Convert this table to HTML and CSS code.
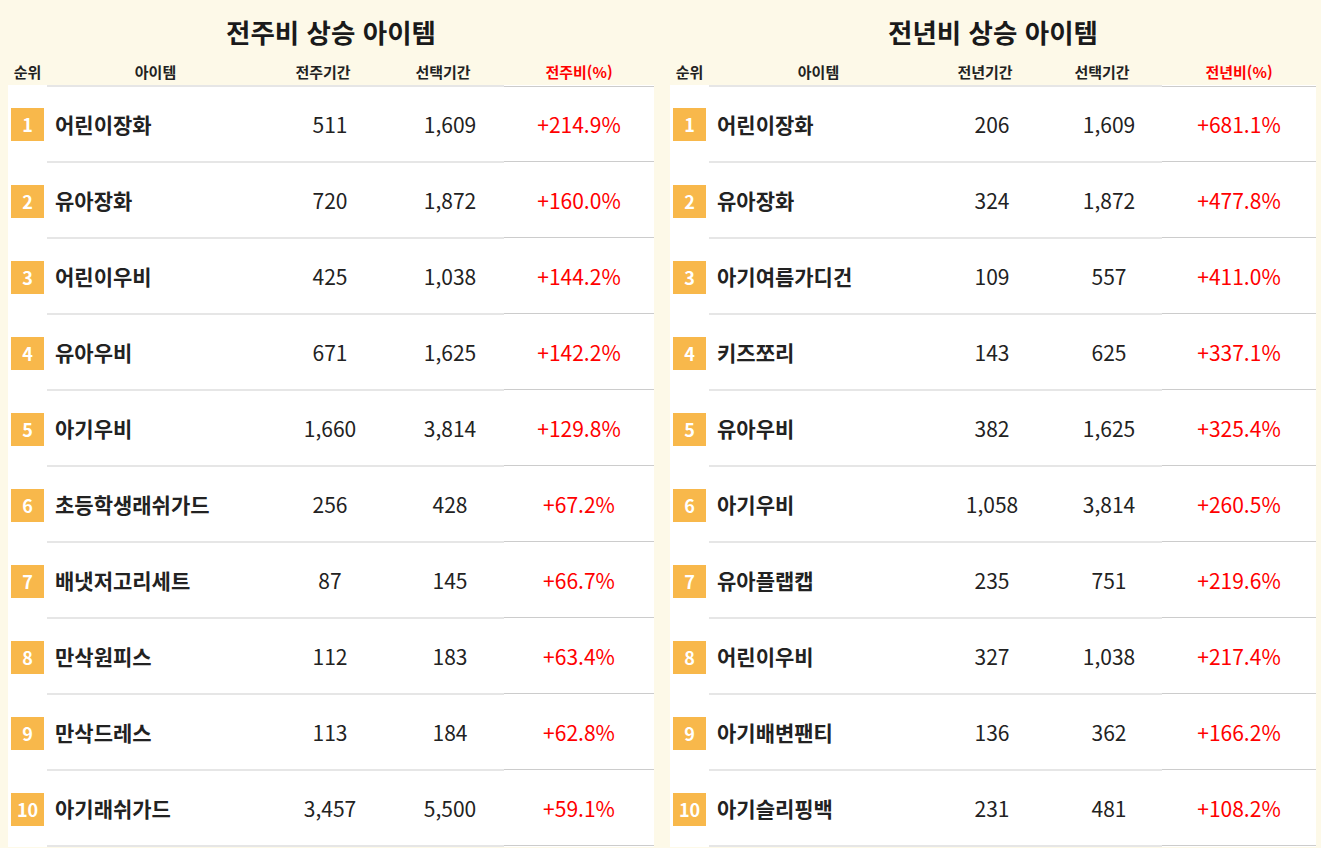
FILE: index.html
```html
<!DOCTYPE html>
<html lang="ko">
<head>
<meta charset="utf-8">
<title>상승 아이템</title>
<link rel="stylesheet" href="styles.css">
</head>
<body>
<div class="page">
  <section class="panel">
    <h2 class="title">전주비 상승 아이템</h2>
    <div class="row head">
      <div class="c rank">순위</div>
      <div class="c item">아이템</div>
      <div class="c num">전주기간</div>
      <div class="c num">선택기간</div>
      <div class="c pct">전주비(%)</div>
    </div>
    <div class="body">
      <div class="row"><div class="c rank"><span class="badge">1</span></div><div class="c item">어린이장화</div><div class="c num">511</div><div class="c num">1,609</div><div class="c pct">+214.9%</div></div>
      <div class="row"><div class="c rank"><span class="badge">2</span></div><div class="c item">유아장화</div><div class="c num">720</div><div class="c num">1,872</div><div class="c pct">+160.0%</div></div>
      <div class="row"><div class="c rank"><span class="badge">3</span></div><div class="c item">어린이우비</div><div class="c num">425</div><div class="c num">1,038</div><div class="c pct">+144.2%</div></div>
      <div class="row"><div class="c rank"><span class="badge">4</span></div><div class="c item">유아우비</div><div class="c num">671</div><div class="c num">1,625</div><div class="c pct">+142.2%</div></div>
      <div class="row"><div class="c rank"><span class="badge">5</span></div><div class="c item">아기우비</div><div class="c num">1,660</div><div class="c num">3,814</div><div class="c pct">+129.8%</div></div>
      <div class="row"><div class="c rank"><span class="badge">6</span></div><div class="c item">초등학생래쉬가드</div><div class="c num">256</div><div class="c num">428</div><div class="c pct">+67.2%</div></div>
      <div class="row"><div class="c rank"><span class="badge">7</span></div><div class="c item">배냇저고리세트</div><div class="c num">87</div><div class="c num">145</div><div class="c pct">+66.7%</div></div>
      <div class="row"><div class="c rank"><span class="badge">8</span></div><div class="c item">만삭원피스</div><div class="c num">112</div><div class="c num">183</div><div class="c pct">+63.4%</div></div>
      <div class="row"><div class="c rank"><span class="badge">9</span></div><div class="c item">만삭드레스</div><div class="c num">113</div><div class="c num">184</div><div class="c pct">+62.8%</div></div>
      <div class="row"><div class="c rank"><span class="badge">10</span></div><div class="c item">아기래쉬가드</div><div class="c num">3,457</div><div class="c num">5,500</div><div class="c pct">+59.1%</div></div>
    </div>
  </section>
  <section class="panel panel-right">
    <h2 class="title">전년비 상승 아이템</h2>
    <div class="row head">
      <div class="c rank">순위</div>
      <div class="c item">아이템</div>
      <div class="c num">전년기간</div>
      <div class="c num">선택기간</div>
      <div class="c pct">전년비(%)</div>
    </div>
    <div class="body">
      <div class="row"><div class="c rank"><span class="badge">1</span></div><div class="c item">어린이장화</div><div class="c num">206</div><div class="c num">1,609</div><div class="c pct">+681.1%</div></div>
      <div class="row"><div class="c rank"><span class="badge">2</span></div><div class="c item">유아장화</div><div class="c num">324</div><div class="c num">1,872</div><div class="c pct">+477.8%</div></div>
      <div class="row"><div class="c rank"><span class="badge">3</span></div><div class="c item">아기여름가디건</div><div class="c num">109</div><div class="c num">557</div><div class="c pct">+411.0%</div></div>
      <div class="row"><div class="c rank"><span class="badge">4</span></div><div class="c item">키즈쪼리</div><div class="c num">143</div><div class="c num">625</div><div class="c pct">+337.1%</div></div>
      <div class="row"><div class="c rank"><span class="badge">5</span></div><div class="c item">유아우비</div><div class="c num">382</div><div class="c num">1,625</div><div class="c pct">+325.4%</div></div>
      <div class="row"><div class="c rank"><span class="badge">6</span></div><div class="c item">아기우비</div><div class="c num">1,058</div><div class="c num">3,814</div><div class="c pct">+260.5%</div></div>
      <div class="row"><div class="c rank"><span class="badge">7</span></div><div class="c item">유아플랩캡</div><div class="c num">235</div><div class="c num">751</div><div class="c pct">+219.6%</div></div>
      <div class="row"><div class="c rank"><span class="badge">8</span></div><div class="c item">어린이우비</div><div class="c num">327</div><div class="c num">1,038</div><div class="c pct">+217.4%</div></div>
      <div class="row"><div class="c rank"><span class="badge">9</span></div><div class="c item">아기배변팬티</div><div class="c num">136</div><div class="c num">362</div><div class="c pct">+166.2%</div></div>
      <div class="row"><div class="c rank"><span class="badge">10</span></div><div class="c item">아기슬리핑백</div><div class="c num">231</div><div class="c num">481</div><div class="c pct">+108.2%</div></div>
    </div>
  </section>
</div>
</body>
</html>
```

FILE: styles.css
```css
html, body {
  margin: 0;
  padding: 0;
  background: #fdf9e8;
  font-family: "Noto Sans CJK KR", "Noto Sans", sans-serif;
  color: #222;
}

.page {
  display: flex;
  gap: 16px;
  padding-left: 8px;
  height: 848px;
  overflow: hidden;
}

.panel {
  width: 646px;
  flex: none;
}

.title {
  margin: 0;
  height: 57px;
  box-sizing: border-box;
  padding-top: 12px;
  line-height: 40px;
  font-size: 26.5px;
  font-weight: 700;
  text-align: center;
  color: #1a1a1a;
}

.row {
  display: grid;
  grid-template-columns: 39px 217px 132px 108px 150px;
}

.panel-right .row {
  grid-template-columns: 39px 219px 128px 106px 154px;
}

.head {
  height: 28px;
  box-sizing: border-box;
  padding-top: 2px;
}

.head .c {
  font-size: 15px;
  font-weight: 700;
  line-height: 26px;
  text-align: center;
  color: #222;
}

.head .num {
  padding-right: 14px;
}

.head .pct {
  color: #ff0000;
}

.body {
  background: #fff;
}

.body .row {
  height: 76px;
}

.body .c {
  display: flex;
  align-items: center;
  box-sizing: border-box;
  border-bottom: 2px solid #e6e6e6;
}

.body .row:first-child {
  height: 78px;
}

.body .row:first-child .c {
  border-top: 2px solid #e6e6e6;
}

.body .rank {
  border: none !important;
  justify-content: center;
}

.body .item {
  padding-left: 8px;
  font-size: 21px;
  font-weight: 700;
  color: #222;
}

.body .num {
  justify-content: center;
  font-size: 21px;
  color: #222;
}

.body .pct {
  justify-content: center;
  font-size: 21px;
  color: #ff0000;
  border-bottom-color: transparent;
  background: linear-gradient(#cccccc, #cccccc) left bottom 1px / 100% 1px no-repeat border-box;
}

.body .row:first-child .pct {
  border-top-color: transparent;
  background:
    linear-gradient(#cccccc, #cccccc) left top 1px / 100% 1px no-repeat border-box,
    linear-gradient(#cccccc, #cccccc) left bottom 1px / 100% 1px no-repeat border-box;
}

.badge {
  display: flex;
  align-items: center;
  justify-content: center;
  width: 33px;
  height: 33px;
  background: #f8b84b;
  color: #fff;
  font-size: 18px;
  font-weight: 700;
}
```
